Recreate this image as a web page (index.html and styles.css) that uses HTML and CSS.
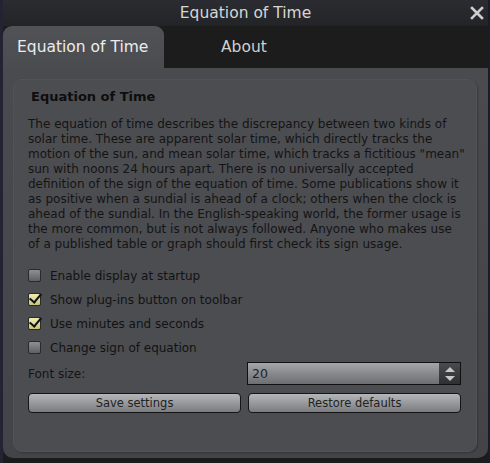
FILE: index.html
```html
<!DOCTYPE html>
<html lang="en">
<head>
  <meta charset="UTF-8">
  <title>Equation of Time</title>
  <link rel="stylesheet" href="styles.css">
</head>
<body>
  <div class="window">
    <div class="title-bar">
      <span class="title">Equation of Time</span>
      <svg class="close" width="14" height="14" viewBox="0 0 14 14">
        <path d="M2 2 L12 12 M12 2 L2 12" stroke="#cdcdcd" stroke-width="2.6" stroke-linecap="square"/>
      </svg>
    </div>

    <div class="tabs">
      <div class="tab active">Equation of Time</div>
      <div class="tab">About</div>
    </div>

    <div class="panel">
      <div class="group">
        <div class="group-title">Equation of Time</div>
        <p class="about">The equation of time describes the discrepancy between two kinds of<br>
          solar time. These are apparent solar time, which directly tracks the<br>
          motion of the sun, and mean solar time, which tracks a fictitious "mean"<br>
          sun with noons 24 hours apart. There is no universally accepted<br>
          definition of the sign of the equation of time. Some publications show it<br>
          as positive when a sundial is ahead of a clock; others when the clock is<br>
          ahead of the sundial. In the English-speaking world, the former usage is<br>
          the more common, but is not always followed. Anyone who makes use<br>
          of a published table or graph should first check its sign usage.</p>

        <div class="options">
          <label class="check"><span class="box"></span>Enable display at startup</label>
          <label class="check"><span class="box on"></span>Show plug-ins button on toolbar</label>
          <label class="check"><span class="box on"></span>Use minutes and seconds</label>
          <label class="check"><span class="box"></span>Change sign of equation</label>
        </div>

        <div class="row">
          <span class="row-label">Font size:</span>
          <div class="spin">
            <span class="spin-value">20</span>
            <span class="spin-arrows">
              <svg width="12" height="20" viewBox="0 0 12 20">
                <polygon points="1,8 11,8 6,3" fill="#c8c8c8"/>
                <polygon points="1,12 11,12 6,17" fill="#c8c8c8"/>
              </svg>
            </span>
          </div>
        </div>

        <div class="row">
          <button class="btn">Save settings</button>
          <button class="btn">Restore defaults</button>
        </div>
      </div>
    </div>
  </div>
</body>
</html>
```

FILE: styles.css
```css
* {
  box-sizing: border-box;
}

body {
  margin: 0;
  width: 490px;
  height: 463px;
  overflow: hidden;
  background: #1d1e28;
  font-family: "DejaVu Sans", sans-serif;
}

.window {
  height: 463px;
  display: flex;
  flex-direction: column;
  background: #1b1b1c;
  border-left: 3px solid #222433;
  border-right: 2px solid #1a1b26;
}

.title-bar {
  height: 26px;
  display: flex;
  align-items: center;
  justify-content: center;
  position: relative;
  background: linear-gradient(#2b2c31, #232427);
}

.title {
  color: #d6d6d6;
  font-size: 15.5px;
}

.close {
  position: absolute;
  right: 4px;
  top: 6px;
}

.tabs {
  height: 42px;
  display: flex;
  align-items: flex-end;
  background: #1c1c1c;
}

.tab {
  height: 42px;
  display: flex;
  align-items: center;
  color: #d0d0d0;
  font-size: 15.5px;
  padding: 0 14px;
  width: 161px;
}

.tab + .tab {
  padding-left: 57px;
}

.tab.active {
  background: linear-gradient(#515256, #4b4c50);
  border-radius: 9px 9px 0 0;
  color: #ececec;
}

.panel {
  flex: 1;
  background: linear-gradient(#4a4b4f, #434448);
  border-radius: 0 0 10px 10px;
  padding: 11px 11px 6px 10px;
  margin-bottom: 5px;
}

.group {
  height: 100%;
  background: #4c4d51;
  border-radius: 9px;
  border: 1px solid #525357;
  box-shadow: 1px 1px 2px rgba(0, 0, 0, 0.25);
  padding: 9px 15px 0 14px;
}

.group-title {
  font-size: 13px;
  font-weight: bold;
  color: #0e0e0e;
  padding-left: 3px;
  margin-bottom: 13px;
}

.about {
  margin: 0 -9px 0 0;
  font-size: 12px;
  line-height: 15px;
  color: #141414;
  white-space: nowrap;
}

.options {
  margin-top: 17px;
  display: flex;
  flex-direction: column;
  gap: 11px;
}

.check {
  display: flex;
  align-items: center;
  font-size: 12px;
  color: #121212;
  height: 13px;
}

.box {
  width: 13px;
  height: 13px;
  margin-right: 9px;
  border: 1px solid #2a2a2a;
  border-radius: 2px;
  background: linear-gradient(#8e8f92, #5f6063);
  position: relative;
}

.box.on {
  background: linear-gradient(#f0edb2, #c9c57c);
}

.box.on::after {
  content: '';
  position: absolute;
  left: 3px;
  top: -3px;
  width: 5px;
  height: 10px;
  border: solid #111;
  border-width: 0 2px 2px 0;
  transform: rotate(40deg);
}

.row {
  display: flex;
  gap: 7px;
  align-items: center;
  margin-top: 8px;
}

.row-label,
.spin,
.btn {
  flex: 1 1 0;
}

.row-label {
  font-size: 12px;
  color: #141414;
}

.spin {
  height: 23px;
  border: 1px solid #101010;
  background: linear-gradient(#a4a5a8, #6d6e71);
  display: flex;
  align-items: center;
}

.spin-value {
  flex: 1;
  padding-left: 4px;
  font-size: 12.5px;
  color: #222;
}

.spin-arrows {
  width: 21px;
  height: 100%;
  background: linear-gradient(#4a4b4e, #2e2f31);
  display: flex;
  align-items: center;
  justify-content: center;
}

.btn {
  height: 20px;
  border: 1px solid #151515;
  border-radius: 4px;
  background: linear-gradient(#b5b6b8, #7b7c7f);
  font-family: "DejaVu Sans", sans-serif;
  font-size: 11.5px;
  color: #222;
  padding: 0;
}
```
